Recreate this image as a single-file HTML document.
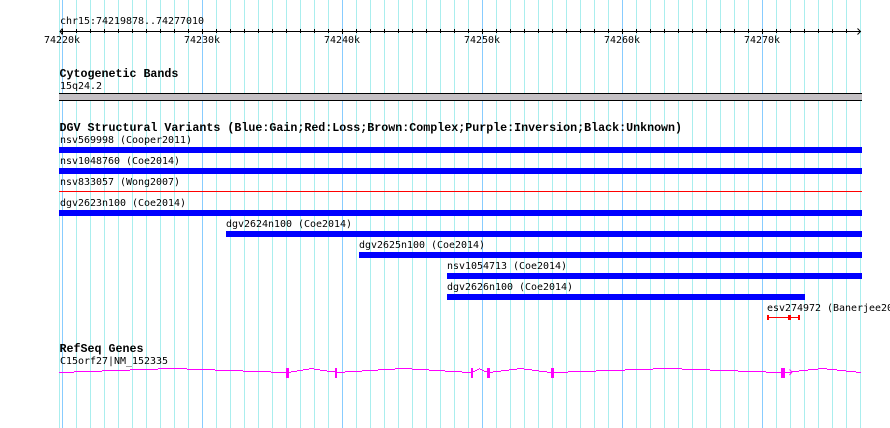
<!DOCTYPE html>
<html>
<head>
<meta charset="utf-8">
<title>GBrowse chr15</title>
<style>
html,body{margin:0;padding:0;background:#fff;width:890px;height:428px;overflow:hidden}
svg{display:block}
text{font-family:"DejaVu Sans Mono","Liberation Mono",monospace;font-size:9.97px;fill:#000;white-space:pre}
text.b{font-family:"Liberation Mono",monospace;font-weight:bold;font-size:11.67px}
</style>
</head>
<body>
<svg width="890" height="428" viewBox="0 0 890 428" xmlns="http://www.w3.org/2000/svg">
<g shape-rendering="crispEdges">
<path fill="none" stroke="#aaeeee" d="M59.5 0V428M76.5 0V428M90.5 0V428M104.5 0V428M118.5 0V428M132.5 0V428M146.5 0V428M160.5 0V428M174.5 0V428M188.5 0V428M216.5 0V428M230.5 0V428M244.5 0V428M258.5 0V428M272.5 0V428M286.5 0V428M300.5 0V428M314.5 0V428M328.5 0V428M356.5 0V428M370.5 0V428M384.5 0V428M398.5 0V428M412.5 0V428M426.5 0V428M440.5 0V428M454.5 0V428M468.5 0V428M496.5 0V428M510.5 0V428M524.5 0V428M538.5 0V428M552.5 0V428M566.5 0V428M580.5 0V428M594.5 0V428M608.5 0V428M636.5 0V428M650.5 0V428M664.5 0V428M678.5 0V428M692.5 0V428M706.5 0V428M720.5 0V428M734.5 0V428M748.5 0V428M776.5 0V428M790.5 0V428M804.5 0V428M818.5 0V428M832.5 0V428M846.5 0V428M860.5 0V428"/>
<path fill="none" stroke="#88ccff" d="M62.5 0V428M202.5 0V428M342.5 0V428M482.5 0V428M622.5 0V428M762.5 0V428"/>

<!-- axis -->
<rect x="60" y="31" width="801" height="1" fill="#000"/>
<path fill="none" stroke="#000" d="M62.5 29V34M76.5 29V33M90.5 29V33M104.5 29V33M118.5 29V33M132.5 29V33M146.5 29V33M160.5 29V33M174.5 29V33M188.5 29V33M202.5 29V34M216.5 29V33M230.5 29V33M244.5 29V33M258.5 29V33M272.5 29V33M286.5 29V33M300.5 29V33M314.5 29V33M328.5 29V33M342.5 29V34M356.5 29V33M370.5 29V33M384.5 29V33M398.5 29V33M412.5 29V33M426.5 29V33M440.5 29V33M454.5 29V33M468.5 29V33M482.5 29V34M496.5 29V33M510.5 29V33M524.5 29V33M538.5 29V33M552.5 29V33M566.5 29V33M580.5 29V33M594.5 29V33M608.5 29V33M622.5 29V34M636.5 29V33M650.5 29V33M664.5 29V33M678.5 29V33M692.5 29V33M706.5 29V33M720.5 29V33M734.5 29V33M748.5 29V33M762.5 29V34M776.5 29V33M790.5 29V33M804.5 29V33M818.5 29V33M832.5 29V33M846.5 29V33"/>

<!-- cytoband -->
<rect x="59" y="93" width="803" height="8" fill="#000"/>
<rect x="59" y="94" width="803" height="6" fill="#c4c0c4"/>

<!-- DGV bars -->
<rect x="59" y="147" width="803" height="6" fill="#0000ff"/>
<rect x="59" y="168" width="803" height="6" fill="#0000ff"/>
<rect x="59" y="191" width="803" height="1" fill="#ff0000"/>
<rect x="59" y="210" width="803" height="6" fill="#0000ff"/>
<rect x="226" y="231" width="636" height="6" fill="#0000ff"/>
<rect x="359" y="252" width="503" height="6" fill="#0000ff"/>
<rect x="447" y="273" width="415" height="6" fill="#0000ff"/>
<rect x="447" y="294" width="358" height="6" fill="#0000ff"/>

<!-- esv -->
<rect x="768" y="317" width="31" height="1" fill="#ff0000"/>
<rect x="767" y="315" width="2" height="5" fill="#ff0000"/>
<rect x="788" y="315" width="3" height="5" fill="#ff0000"/>
<rect x="798" y="315" width="2" height="5" fill="#ff0000"/>

<!-- gene -->
<g fill="#ff00ff">
<rect x="59" y="372" width="15" height="1"/><rect x="74" y="371" width="28" height="1"/><rect x="102" y="370" width="28" height="1"/><rect x="130" y="369" width="28" height="1"/><rect x="158" y="368" width="29" height="1"/><rect x="187" y="369" width="28" height="1"/><rect x="215" y="370" width="28" height="1"/><rect x="243" y="371" width="28" height="1"/><rect x="271" y="372" width="15" height="1"/>
<rect x="286" y="368" width="3" height="10"/>
<rect x="289" y="372" width="2" height="1"/><rect x="291" y="371" width="6" height="1"/><rect x="297" y="370" width="6" height="1"/><rect x="303" y="369" width="6" height="1"/><rect x="309" y="368" width="5" height="1"/><rect x="314" y="369" width="6" height="1"/><rect x="320" y="370" width="7" height="1"/><rect x="327" y="371" width="8" height="1"/>
<rect x="335" y="368" width="2" height="10"/>
<rect x="337" y="372" width="8" height="1"/><rect x="345" y="371" width="17" height="1"/><rect x="362" y="370" width="16" height="1"/><rect x="378" y="369" width="17" height="1"/><rect x="395" y="368" width="17" height="1"/><rect x="412" y="369" width="17" height="1"/><rect x="429" y="370" width="16" height="1"/><rect x="445" y="371" width="17" height="1"/><rect x="462" y="372" width="9" height="1"/>
<rect x="471" y="368" width="2" height="10"/>
<rect x="473" y="371" width="2" height="1"/><rect x="475" y="370" width="2" height="1"/><rect x="477" y="369" width="2" height="1"/><rect x="479" y="368" width="1" height="1"/><rect x="480" y="369" width="2" height="1"/><rect x="482" y="370" width="2" height="1"/><rect x="484" y="371" width="3" height="1"/>
<rect x="487" y="368" width="3" height="10"/>
<rect x="490" y="372" width="3" height="1"/><rect x="493" y="371" width="8" height="1"/><rect x="501" y="370" width="8" height="1"/><rect x="509" y="369" width="8" height="1"/><rect x="517" y="368" width="7" height="1"/><rect x="524" y="369" width="8" height="1"/><rect x="532" y="370" width="7" height="1"/><rect x="539" y="371" width="8" height="1"/><rect x="547" y="372" width="4" height="1"/>
<rect x="551" y="368" width="3" height="10"/>
<rect x="554" y="372" width="14" height="1"/><rect x="568" y="371" width="28" height="1"/><rect x="596" y="370" width="29" height="1"/><rect x="625" y="369" width="28" height="1"/><rect x="653" y="368" width="29" height="1"/><rect x="682" y="369" width="28" height="1"/><rect x="710" y="370" width="28" height="1"/><rect x="738" y="371" width="28" height="1"/><rect x="766" y="372" width="15" height="1"/>
<rect x="781" y="368" width="4" height="10"/>
<rect x="785" y="372" width="7" height="1"/><rect x="792" y="371" width="7" height="1"/><rect x="799" y="370" width="9" height="1"/><rect x="808" y="369" width="10" height="1"/><rect x="818" y="368" width="9" height="1"/><rect x="827" y="369" width="10" height="1"/><rect x="837" y="370" width="9" height="1"/><rect x="846" y="371" width="10" height="1"/><rect x="856" y="372" width="5" height="1"/>
</g>
</g>

<!-- arrows -->
<path fill="none" stroke="#000" d="M62.5 28.5L60 31.5L62.5 34.5M857.5 28.5L860.5 31.5L857.5 34.5"/>
<path fill="none" stroke="#ff00ff" d="M789.5 369.5L792 372L789.5 375"/>

<!-- text -->
<text x="60" y="24">chr15:74219878..74277010</text>
<text x="44" y="43">74220k</text>
<text x="184" y="43">74230k</text>
<text x="324" y="43">74240k</text>
<text x="464" y="43">74250k</text>
<text x="604" y="43">74260k</text>
<text x="744" y="43">74270k</text>

<text class="b" x="59.5" y="77">Cytogenetic Bands</text>
<text x="60" y="89">15q24.2</text>

<text class="b" x="59.5" y="131">DGV Structural Variants (Blue:Gain;Red:Loss;Brown:Complex;Purple:Inversion;Black:Unknown)</text>
<text x="60" y="143">nsv569998 (Cooper2011)</text>
<text x="60" y="164">nsv1048760 (Coe2014)</text>
<text x="60" y="185">nsv833057 (Wong2007)</text>
<text x="60" y="206">dgv2623n100 (Coe2014)</text>
<text x="226" y="227">dgv2624n100 (Coe2014)</text>
<text x="359" y="248">dgv2625n100 (Coe2014)</text>
<text x="447" y="269">nsv1054713 (Coe2014)</text>
<text x="447" y="290">dgv2626n100 (Coe2014)</text>
<text x="767" y="311">esv274972 (Banerjee2011)</text>

<text class="b" x="59.5" y="352">RefSeq Genes</text>
<text x="60" y="364">C15orf27|NM_152335</text>
</svg>
</body>
</html>
